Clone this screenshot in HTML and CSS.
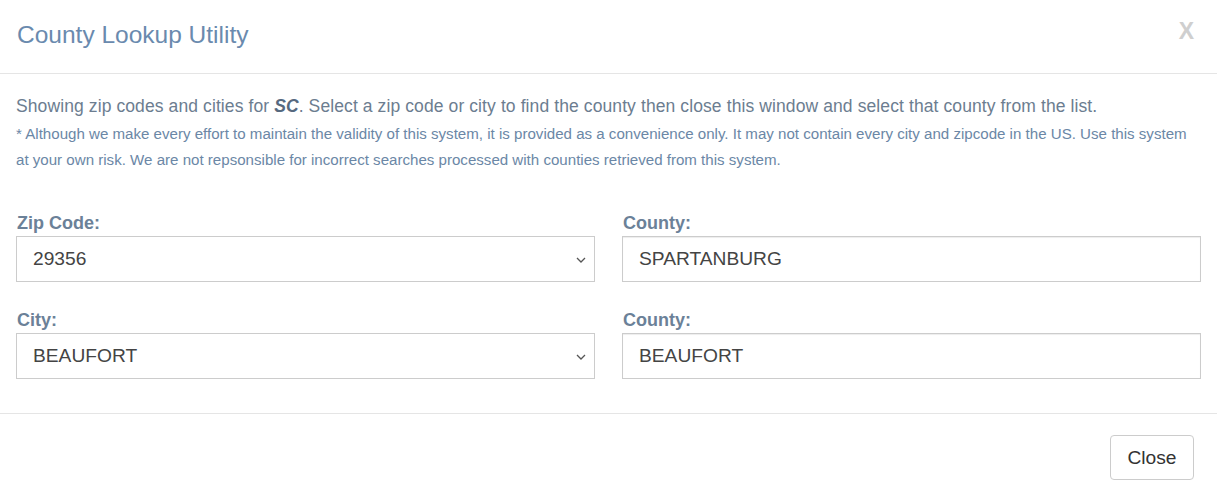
FILE: index.html
```html
<!DOCTYPE html>
<html>
<head>
<meta charset="utf-8">
<link rel="stylesheet" href="styles.css">
</head>
<body>
<div class="modal">
  <div class="modal-header">
    <h4 class="modal-title">County Lookup Utility</h4>
    <button class="close-x" type="button">X</button>
  </div>
  <div class="modal-body">
    <p class="intro">Showing zip codes and cities for <b><i>SC</i></b>. Select a zip code or city to find the county then close this window and select that county from the list.</p>
    <p class="disclaimer">* Although we make every effort to maintain the validity of this system, it is provided as a convenience only. It may not contain every city and zipcode in the US. Use this system at your own risk. We are not repsonsible for incorrect searches processed with counties retrieved from this system.</p>
    <div class="form-grid">
      <div class="field">
        <label class="label">Zip Code:</label>
        <div class="control select">
          <span>29356</span>
          <svg class="chev" width="10" height="6" viewBox="0 0 10 6"><path d="M1 1l4 4 4-4" fill="none" stroke="#555" stroke-width="1.3"/></svg>
        </div>
      </div>
      <div class="field">
        <label class="label">County:</label>
        <div class="control input">SPARTANBURG</div>
      </div>
      <div class="field">
        <label class="label">City:</label>
        <div class="control select">
          <span>BEAUFORT</span>
          <svg class="chev" width="10" height="6" viewBox="0 0 10 6"><path d="M1 1l4 4 4-4" fill="none" stroke="#555" stroke-width="1.3"/></svg>
        </div>
      </div>
      <div class="field">
        <label class="label">County:</label>
        <div class="control input">BEAUFORT</div>
      </div>
    </div>
  </div>
  <div class="modal-footer">
    <button class="btn" type="button">Close</button>
  </div>
</div>
</body>
</html>
```
FILE: styles.css
```css
* { box-sizing: border-box; }
html, body { margin: 0; padding: 0; background: #fff; }
body { font-family: "Liberation Sans", Arial, sans-serif; }

.modal { width: 1217px; }

.modal-header {
  height: 74px;
  border-bottom: 1px solid #e5e5e5;
  display: flex;
  align-items: center;
  justify-content: space-between;
  padding: 0 23px 4px 17px;
}
.modal-title {
  margin: 0;
  font-size: 24.5px;
  font-weight: normal;
  color: #6a8aae;
}
.close-x {
  border: 0;
  background: none;
  padding: 0;
  font-family: "Liberation Sans", Arial, sans-serif;
  font-weight: bold;
  font-size: 23px;
  color: #cfcfcf;
  margin-top: -6px;
}

.modal-body { padding: 19px 16px 34px 16px; }
.intro {
  margin: 0;
  font-size: 17.5px;
  letter-spacing: 0.1px;
  line-height: 26px;
  color: #6c7d90;
}
.intro b { color: #56697f; }
.disclaimer {
  margin: 2px 0 0 0;
  padding-right: 6px;
  font-size: 15.1px;
  line-height: 26px;
  color: #6b87a6;
}

.form-grid {
  display: grid;
  grid-template-columns: 1fr 1fr;
  column-gap: 27px;
  row-gap: 28px;
  margin-top: 40px;
}
.label {
  display: block;
  font-weight: bold;
  font-size: 18px;
  line-height: 20px;
  color: #6b8198;
  margin-bottom: 3px;
  padding-left: 1px;
}
.control {
  height: 46px;
  border: 1px solid #cccccc;
  font-size: 19.2px;
  color: #444;
  padding: 0 16px;
  display: flex;
  align-items: center;
  background: #fff;
}
.input { box-shadow: inset 0 1px 1px rgba(0,0,0,0.075); }
.select { justify-content: space-between; padding-right: 8px; }
.chev { margin-top: 1px; }

.modal-footer {
  border-top: 1px solid #e5e5e5;
  padding: 21px 23px 23px;
  display: flex;
  justify-content: flex-end;
}
.btn {
  font-family: "Liberation Sans", Arial, sans-serif;
  font-size: 19.2px;
  color: #333;
  background: #fff;
  border: 1px solid #ccc;
  border-radius: 4px;
  width: 84px;
  height: 45px;
  padding: 0;
}
```
